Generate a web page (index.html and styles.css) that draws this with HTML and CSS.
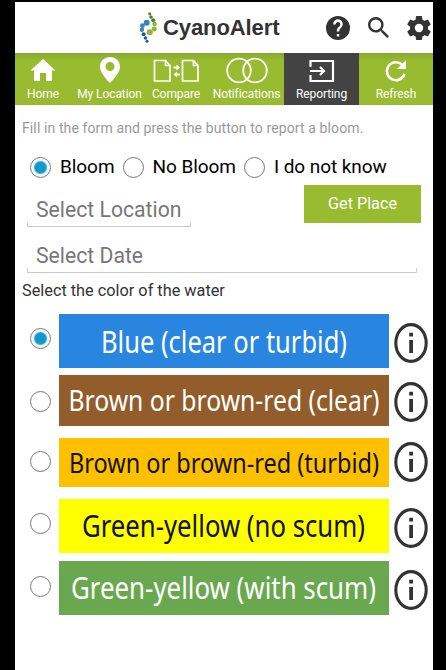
FILE: index.html
```html
<!DOCTYPE html>
<html lang="en">
<head>
<meta charset="utf-8">
<title>CyanoAlert</title>
<link rel="stylesheet" href="styles.css">
</head>
<body>
<svg width="0" height="0" class="defs">
  <symbol id="info" viewBox="0 0 34 40"><ellipse cx="17" cy="20" rx="15.2" ry="18.400" fill="none" stroke="#333" stroke-width="3.100"/><path d="M15.200 9.800h3.800v3.700h-3.800zM15.200 17h3.800v13h-3.800z" fill="#333"/></symbol>
</svg>
<div class="phone">
  <header class="header">
    <svg class="logo" viewBox="0 0 20 34" width="20" height="34">
      <g fill="#4e7d2b"><circle cx="10.700" cy="2.700" r="1.500"/><circle cx="12" cy="6" r="1.800"/><circle cx="14.200" cy="9.300" r="2"/></g>
      <g fill="#8fb832"><circle cx="15.600" cy="13" r="2.200"/><circle cx="15.200" cy="18" r="2.500"/><circle cx="10.700" cy="21.200" r="3"/></g>
      <g fill="#3488b5"><circle cx="7.700" cy="11.700" r="3"/><circle cx="3.400" cy="14.700" r="2.400"/><circle cx="2.900" cy="18.800" r="2.200"/></g>
      <g fill="#245a88"><circle cx="4.600" cy="23.300" r="2"/><circle cx="6.500" cy="27" r="1.800"/><circle cx="8" cy="30.300" r="1.500"/></g>
    </svg>
    <h1 class="brand">CyanoAlert</h1>
    <div class="actions">
      <svg viewBox="2 2 20 20" width="24" height="24"><path fill="#333" d="M12 2a10 10 0 1 0 0 20 10 10 0 0 0 0-20zm1 17h-2v-2h2zm2.070-7.750-.9.92C13.450 12.900 13 13.500 13 15h-2v-.5c0-1.100.45-2.100 1.170-2.830l1.240-1.260A2 2 0 1 0 10 9H8a4 4 0 1 1 7.070 2.250z"/></svg>
      <svg viewBox="3 3 17.500 17.500" width="21" height="21"><path fill="#333" d="M15.500 14h-.79l-.28-.27A6.470 6.470 0 0 0 16 9.500 6.500 6.500 0 1 0 9.500 16c1.610 0 3.090-.59 4.230-1.570l.27.28v.79l5 4.990L20.490 19zm-6 0a4.500 4.500 0 1 1 0-9 4.500 4.500 0 0 1 0 9z"/></svg>
      <svg viewBox="2 2 20 20" width="24" height="24"><path fill="#333" d="M19.430 12.980c.04-.32.07-.64.07-.98s-.03-.66-.07-.98l2.110-1.650a.5.5 0 0 0 .12-.64l-2-3.460a.5.5 0 0 0-.61-.22l-2.490 1a7.300 7.300 0 0 0-1.690-.98l-.38-2.650A.49.49 0 0 0 14 2h-4a.49.49 0 0 0-.49.42l-.38 2.650c-.61.25-1.170.59-1.690.98l-2.490-1a.49.49 0 0 0-.61.22l-2 3.460a.49.49 0 0 0 .12.64l2.110 1.650a7.900 7.900 0 0 0 0 1.960l-2.110 1.650a.5.5 0 0 0-.12.64l2 3.460c.12.22.39.3.61.22l2.490-1c.52.4 1.080.73 1.690.98l.38 2.650c.03.24.24.42.49.42h4c.25 0 .46-.18.49-.42l.38-2.650c.61-.25 1.170-.59 1.690-.98l2.490 1c.23.09.49 0 .61-.22l2-3.460a.5.5 0 0 0-.12-.64zM12 15.500a3.500 3.500 0 1 1 0-7 3.500 3.500 0 0 1 0 7z"/></svg>
    </div>
  </header>
  <nav class="nav">
    <a class="tab"><svg class="icon" viewBox="0 0 26 28" width="26" height="28"><path fill="#fff" d="M13 3 .5 14.500H4V25h6v-8h6v8h6V14.500h3.500z"/></svg><span>Home</span></a>
    <a class="tab"><svg class="icon" viewBox="0 0 22 28" width="22" height="28"><path fill="#fff" fill-rule="evenodd" d="M11 1C5.200 1 1 5.300 1 11c0 6.500 10 16 10 16s10-9.500 10-16c0-5.700-4.200-10-10-10zm0 5a4.500 4.500 0 1 1 0 9 4.500 4.500 0 0 1 0-9z"/></svg><span>My Location</span></a>
    <a class="tab"><svg class="icon" viewBox="0 0 48 28" width="48" height="28"><g fill="none" stroke="#fff" stroke-width="1.700"><path d="M2.500 4.500h11l4.500 5V25H2.500zM13.500 4.500v5h4.500M30.500 4.500h11l4.500 5V25H30.500zM41.500 4.500v5h4.500"/></g><path fill="#fff" d="M21.500 10.500h3V8.500l3.500 3-3.500 3v-2h-3zM28 19.500h-3v2l-3.500-3 3.500-3v2h3z"/></svg><span>Compare</span></a>
    <a class="tab alerts"><svg class="icon" viewBox="0 0 44 28" width="44" height="28"><g fill="none" stroke="#fff" stroke-width="1.800"><circle cx="14" cy="14.500" r="11.800"/><circle cx="30" cy="14.500" r="11.800"/></g></svg><span>Notifications</span></a>
    <a class="tab active"><svg class="icon" viewBox="0 0 28 28" width="28" height="28"><g fill="none" stroke="#fff" stroke-width="2.200"><path d="M2.500 11V5h22.500v20H2.500v-6M2 15h13M12 11l4 4-4 4"/></g></svg><span>Reporting</span></a>
    <a class="tab"><svg class="icon" viewBox="0 0 24 28" width="24" height="28"><path fill="none" stroke="#fff" stroke-width="2.500" d="M20.500 18A9 9 0 1 1 18 8.500"/><path fill="#fff" d="M22 4v9h-9z"/></svg><span>Refresh</span></a>
  </nav>
  <main class="form">
    <p class="hint">Fill in the form and press the button to report a bloom.</p>
    <div class="options">
      <label><i class="radio checked"></i><span>Bloom</span></label>
      <label><i class="radio"></i><span>No Bloom</span></label>
      <label><i class="radio"></i><span>I do not know</span></label>
    </div>
    <div class="place">
      <div class="field location">Select Location</div>
      <button class="get">Get Place</button>
    </div>
    <div class="field date">Select Date</div>
    <p class="legend">Select the color of the water</p>
    <div class="colors">
      <div class="row blue"><i class="radio checked"></i><svg class="swatch" height="54"><text x="42" y="38.500" textLength="246" lengthAdjust="spacingAndGlyphs" font-size="30.500">Blue (clear or turbid)</text></svg><svg class="info"><use href="#info"/></svg></div>
      <div class="row brown"><i class="radio"></i><svg class="swatch" height="51"><text x="9.500" y="36.300" textLength="311" lengthAdjust="spacingAndGlyphs" font-size="29">Brown or brown-red (clear)</text></svg><svg class="info"><use href="#info"/></svg></div>
      <div class="row orange"><i class="radio"></i><svg class="swatch" height="49"><text x="10" y="34.500" textLength="310" lengthAdjust="spacingAndGlyphs" font-size="28">Brown or brown-red (turbid)</text></svg><svg class="info"><use href="#info"/></svg></div>
      <div class="row yellow"><i class="radio"></i><svg class="swatch" height="54"><text x="23" y="38" textLength="283" lengthAdjust="spacingAndGlyphs" font-size="30">Green-yellow (no scum)</text></svg><svg class="info"><use href="#info"/></svg></div>
      <div class="row green"><i class="radio"></i><svg class="swatch" height="54"><text x="12" y="38.300" textLength="305" lengthAdjust="spacingAndGlyphs" font-size="30">Green-yellow (with scum)</text></svg><svg class="info"><use href="#info"/></svg></div>
    </div>
  </main>
</div>
</body>
</html>
```
FILE: styles.css
```css
* { box-sizing: border-box; }
body { margin: 0; background: #000; font-family: Roboto, "Liberation Sans", sans-serif; }
p, h1 { margin: 0; font-weight: normal; }
.defs { display: block; }
.phone { width: 418px; height: 668px; margin: 2px 0 0 15px; background: #fff; overflow: hidden; }
.header { height: 51px; display: flex; align-items: center; padding-left: 124px; }
.brand { font: bold 22px/50px "Liberation Sans", sans-serif; letter-spacing: -.1px; color: #333; margin-left: 4px; white-space: nowrap; width: 163px; }
.actions { display: flex; align-items: center; gap: 18px; }
.actions svg { flex: none; }
.nav { height: 52px; display: grid; grid-template-columns: 56px 77px 56px 80px 75px 74px; background: linear-gradient(#86a92c, #98bb30 8px); }
.tab { display: flex; flex-direction: column; align-items: center; padding-top: 3px; color: #fff; font-size: 12px; letter-spacing: -.08px; line-height: 16px; white-space: nowrap; }
.alerts { padding-left: 5px; }
.icon { display: block; margin-bottom: 2px; flex: none; }
.active { background: #434343; }
.hint { margin: 13px 0 0 7px; font-size: 14px; letter-spacing: .11px; line-height: 20px; color: #999; white-space: nowrap; }
.options { display: flex; gap: 8px; margin: 17px 0 0 15px; height: 24px; font-size: 19px; letter-spacing: -.06px; line-height: 24px; white-space: nowrap; }
.options label { display: flex; align-items: center; gap: 9px; }
.radio { flex: none; display: block; width: 21px; height: 21px; border: 1px solid #777; border-radius: 50%; }
.checked { background: radial-gradient(circle, #1598c9 0 5px, #4bb4d8 6px, #dff3fa 7px, #fff 9px); }
.place { display: flex; justify-content: space-between; margin: 6px 12px 0 12px; height: 42px; }
.field { border-bottom: 1px solid #c8c8c8; color: #777; font-size: 21.2px; padding-left: 9px; white-space: nowrap; background: linear-gradient(#d0d0d0, #d0d0d0) left bottom / 1px 4px no-repeat, linear-gradient(#d0d0d0, #d0d0d0) right bottom / 1px 4px no-repeat; }
.location { width: 164px; line-height: 49px; }
.get { width: 117px; height: 38px; border: 0; padding: 0; background: #98bb30; color: #fff; font: 16.2px/38px Roboto, sans-serif; }
.date { width: 390px; height: 46px; line-height: 58px; margin-left: 12px; }
.legend { margin: 8px 0 0 7px; font-size: 16.3px; line-height: 20px; color: #333; }
.colors { margin: 13px 0 0 15px; }
.row { display: flex; align-items: flex-start; }
.swatch { width: 330px; margin-left: 8px; overflow: visible; font-family: "Noto Sans", sans-serif; fill: #fff; flex: none; }
.info { width: 34px; height: 40px; flex: none; margin-left: 5px; }
.row .radio { margin-top: 14px; }
.row .info { margin-top: 9px; }
.blue .swatch { background: #2986e0; }
.brown { margin-top: 7px; }
.brown .swatch { background: #925d2a; }
.brown .radio { margin-top: 16px; }
.brown .info { margin-top: 7px; }
.orange { margin-top: 12px; }
.orange .swatch { background: #ffc000; fill: #111; }
.orange .radio { margin-top: 13px; }
.orange .info { margin-top: 4px; }
.yellow { margin-top: 12px; }
.yellow .swatch { background: #ff0; fill: #111; }
.green { margin-top: 8px; }
.green .swatch { background: #6aa84f; }
.green .radio { margin-top: 15px; }
```
